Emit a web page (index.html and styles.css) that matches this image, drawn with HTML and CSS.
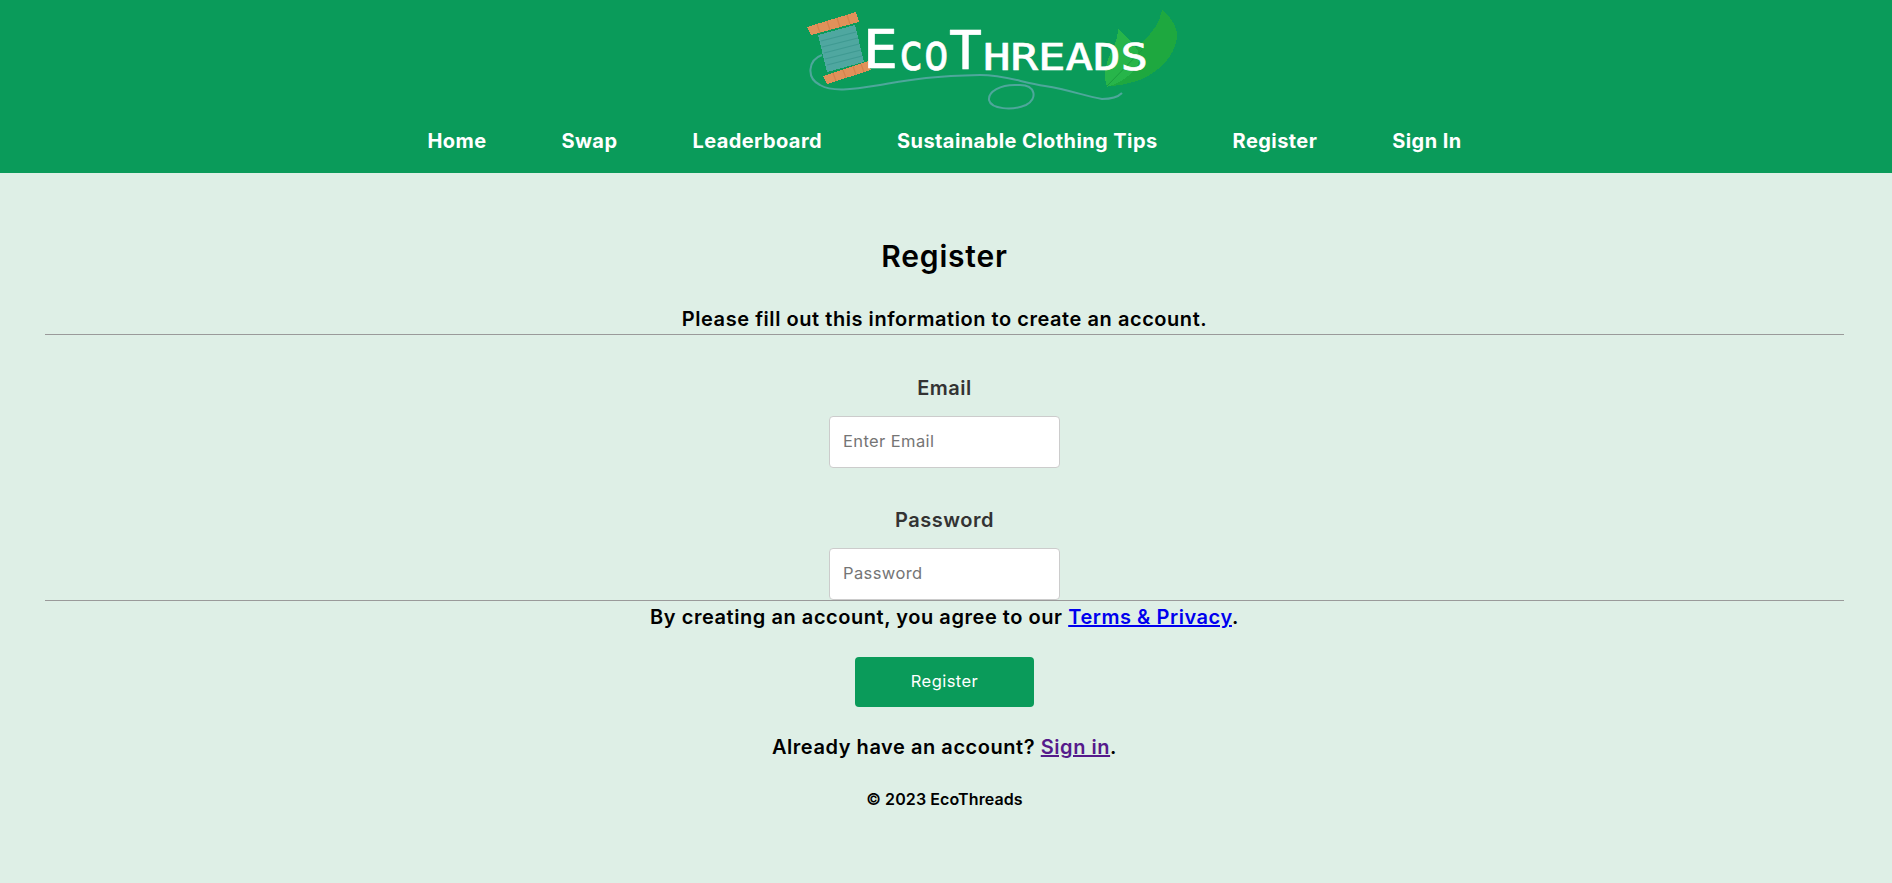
FILE: index.html
```html
<!DOCTYPE html>
<html lang="en">
<head>
<meta charset="utf-8">
<title>Register - EcoThreads</title>
<link rel="stylesheet" href="styles.css">
</head>
<body>
<header class="site-header">
  <a class="logo-link" href="#" aria-label="EcoThreads">
    <svg class="logo" viewBox="-88 0 508 119" width="508" height="119">
      <path class="leaf-back" d="M382 10 C392 18 398 28 397 38 C394 58 378 72 360 80 C345 85 335 86 327 86 C335 70 350 52 362 42 C372 34 380 22 382 10Z"/>
      <path class="leaf-front" d="M338 28 C348 38 358 48 360 56 C360 68 345 82 327 87 C322 76 326 62 332 50 C336 42 338 36 338 28Z"/>
      <path class="leaf-vein" d="M327 86 L362 50"/>
      <path class="thread" d="M42 55 C28 60 26 78 40 85 C52 92 70 90 100 85 C130 80 150 76 200 75 C225 75 240 82 265 86 C290 90 305 96 322 99 C330 99 338 97 342 93"/>
      <path class="thread" d="M238 85 C220 84 208 92 209 100 C211 109 232 111 246 105 C258 99 256 84 238 85Z"/>
      <path class="spool-thread" d="M38 35 L75 25 L84 62 L47 72Z"/>
      <path class="spool-lines" d="M41 41 L76 32 M42 47 L78 38 M44 53 L79 44 M45 59 L81 50 M47 65 L82 56"/>
      <path class="spool-end" d="M27 27 L76 12 L79 22 L31 35Z"/>
      <path class="spool-end" d="M43 76 L88 61 L91 70 L47 84Z"/>
      <path class="spool-stitch" d="M37 24 L40 33 M47 21 L50 30 M57 18 L60 27 M67 15 L70 24 M53 73 L56 81 M63 70 L66 78 M73 66 L76 75 M81 64 L84 72"/>
      <text class="logo-big" x="83" y="68" textLength="35" lengthAdjust="spacingAndGlyphs">E</text>
      <text class="logo-low" x="118" y="70" textLength="51" lengthAdjust="spacingAndGlyphs">co</text>
      <text class="logo-big" x="169" y="69" textLength="33" lengthAdjust="spacingAndGlyphs">T</text>
      <text class="logo-small" x="203" y="70" textLength="165" lengthAdjust="spacingAndGlyphs">HREADS</text>
    </svg>
  </a>
  <nav class="main-nav">
    <a href="#">Home</a>
    <a href="#">Swap</a>
    <a href="#">Leaderboard</a>
    <a href="#">Sustainable Clothing Tips</a>
    <a href="#">Register</a>
    <a href="#">Sign In</a>
  </nav>
</header>
<main class="page">
  <h1 class="title">Register</h1>
  <form class="form">
    <p class="intro">Please fill out this information to create an account.</p>
    <hr class="rule">
    <div class="field">
      <label class="label" for="email">Email</label>
      <input class="input" id="email" type="text" placeholder="Enter Email">
    </div>
    <div class="field">
      <label class="label" for="password">Password</label>
      <input class="input" id="password" type="password" placeholder="Password">
    </div>
    <hr class="rule">
    <p class="terms">By creating an account, you agree to our <a class="link" href="#">Terms &amp; Privacy</a>.</p>
    <button class="submit" type="button">Register</button>
    <p class="signin">Already have an account? <a class="link visited" href="#">Sign in</a>.</p>
  </form>
</main>
<footer class="site-footer">© 2023 EcoThreads</footer>
</body>
</html>
```
FILE: styles.css
```css
* { box-sizing: border-box; }
html, body { margin: 0; height: 100%; }
body {
  background: #deefe6;
  color: #000;
  font-family: "Inter", "Open Sans", sans-serif;
  overflow: hidden;
}
.site-header {
  background: #0a9b5a;
  height: 173px;
  display: flex;
  flex-direction: column;
  align-items: center;
}
.logo-link { display: block; height: 119px; }
.logo { display: block; }
.logo text {
  fill: #fff;
  stroke: #fff;
  stroke-width: 0.7px;
  font-family: "DejaVu Sans Mono", monospace;
  font-weight: 400;
}
.logo-big { font-size: 54px; }
.logo-low { font-size: 52px; }
.logo-small { font-size: 38px; }
.leaf-back { fill: #1ea83f; shape-rendering: crispEdges; }
.leaf-front { fill: #27b54a; shape-rendering: crispEdges; }
.leaf-vein { stroke: #1a9c3e; stroke-width: 1; fill: none; }
.thread { fill: none; stroke: #4ea79b; stroke-width: 2; }
.spool-thread { fill: #4fa7a0; shape-rendering: crispEdges; }
.spool-lines { stroke: #3f9a92; stroke-width: 1.2; fill: none; }
.spool-end { fill: #e0915a; shape-rendering: crispEdges; }
.spool-stitch { stroke: #d3824c; stroke-width: 1.2; fill: none; }
.main-nav {
  display: flex;
  justify-content: center;
  gap: 75px;
  margin-top: 7px;
  padding-right: 3px;
}
.main-nav a {
  color: #fff;
  text-decoration: none;
  font-size: 20px;
  font-weight: 700;
  line-height: 30px;
  letter-spacing: 0.42px;
}
.page { padding: 0 48px 0 45px; text-align: center; }
.title {
  font-size: 30px;
  font-weight: 600;
  line-height: 44px;
  letter-spacing: 0.8px;
  margin: 61px 0 0;
}
.form { display: flex; flex-direction: column; align-items: center; }
.intro, .terms, .signin {
  font-size: 20px;
  font-weight: 600;
  line-height: 30px;
  letter-spacing: 0.55px;
  margin: 0;
}
.intro { margin-top: 26px; }
.rule {
  width: 100%;
  margin: 0;
  border: 0;
  border-top: 1px solid #9a9a9a;
}
.field { display: flex; flex-direction: column; align-items: center; }
.label {
  color: #333;
  font-size: 20px;
  font-weight: 600;
  line-height: 30px;
  letter-spacing: 0.5px;
  margin: 38px 0 13px;
}
.field + .field .label { margin-top: 37px; }
.input {
  width: 231px;
  height: 52px;
  padding: 0 13px 2px;
  border: 1px solid #ccc;
  border-radius: 4px;
  background: #fff;
  font: 400 16.5px "Inter", sans-serif;
  letter-spacing: 0.4px;
  margin: 0;
}
.input::placeholder { color: #757575; }
.terms { margin-top: 1px; }
.link { color: #0000ee; text-decoration: underline; }
.link.visited { color: #551a8b; }
.submit {
  width: 179px;
  height: 50px;
  margin-top: 25px;
  padding-bottom: 3px;
  border: 0;
  border-radius: 4px;
  background: #0a9b5a;
  color: #fff;
  font: 400 16.5px "Inter", sans-serif;
  letter-spacing: 0.45px;
}
.signin { margin-top: 25px; }
.site-footer {
  margin-top: 25px;
  padding-right: 3px;
  text-align: center;
  font-size: 16px;
  font-weight: 600;
  line-height: 24px;
  letter-spacing: 0.1px;
}
```
